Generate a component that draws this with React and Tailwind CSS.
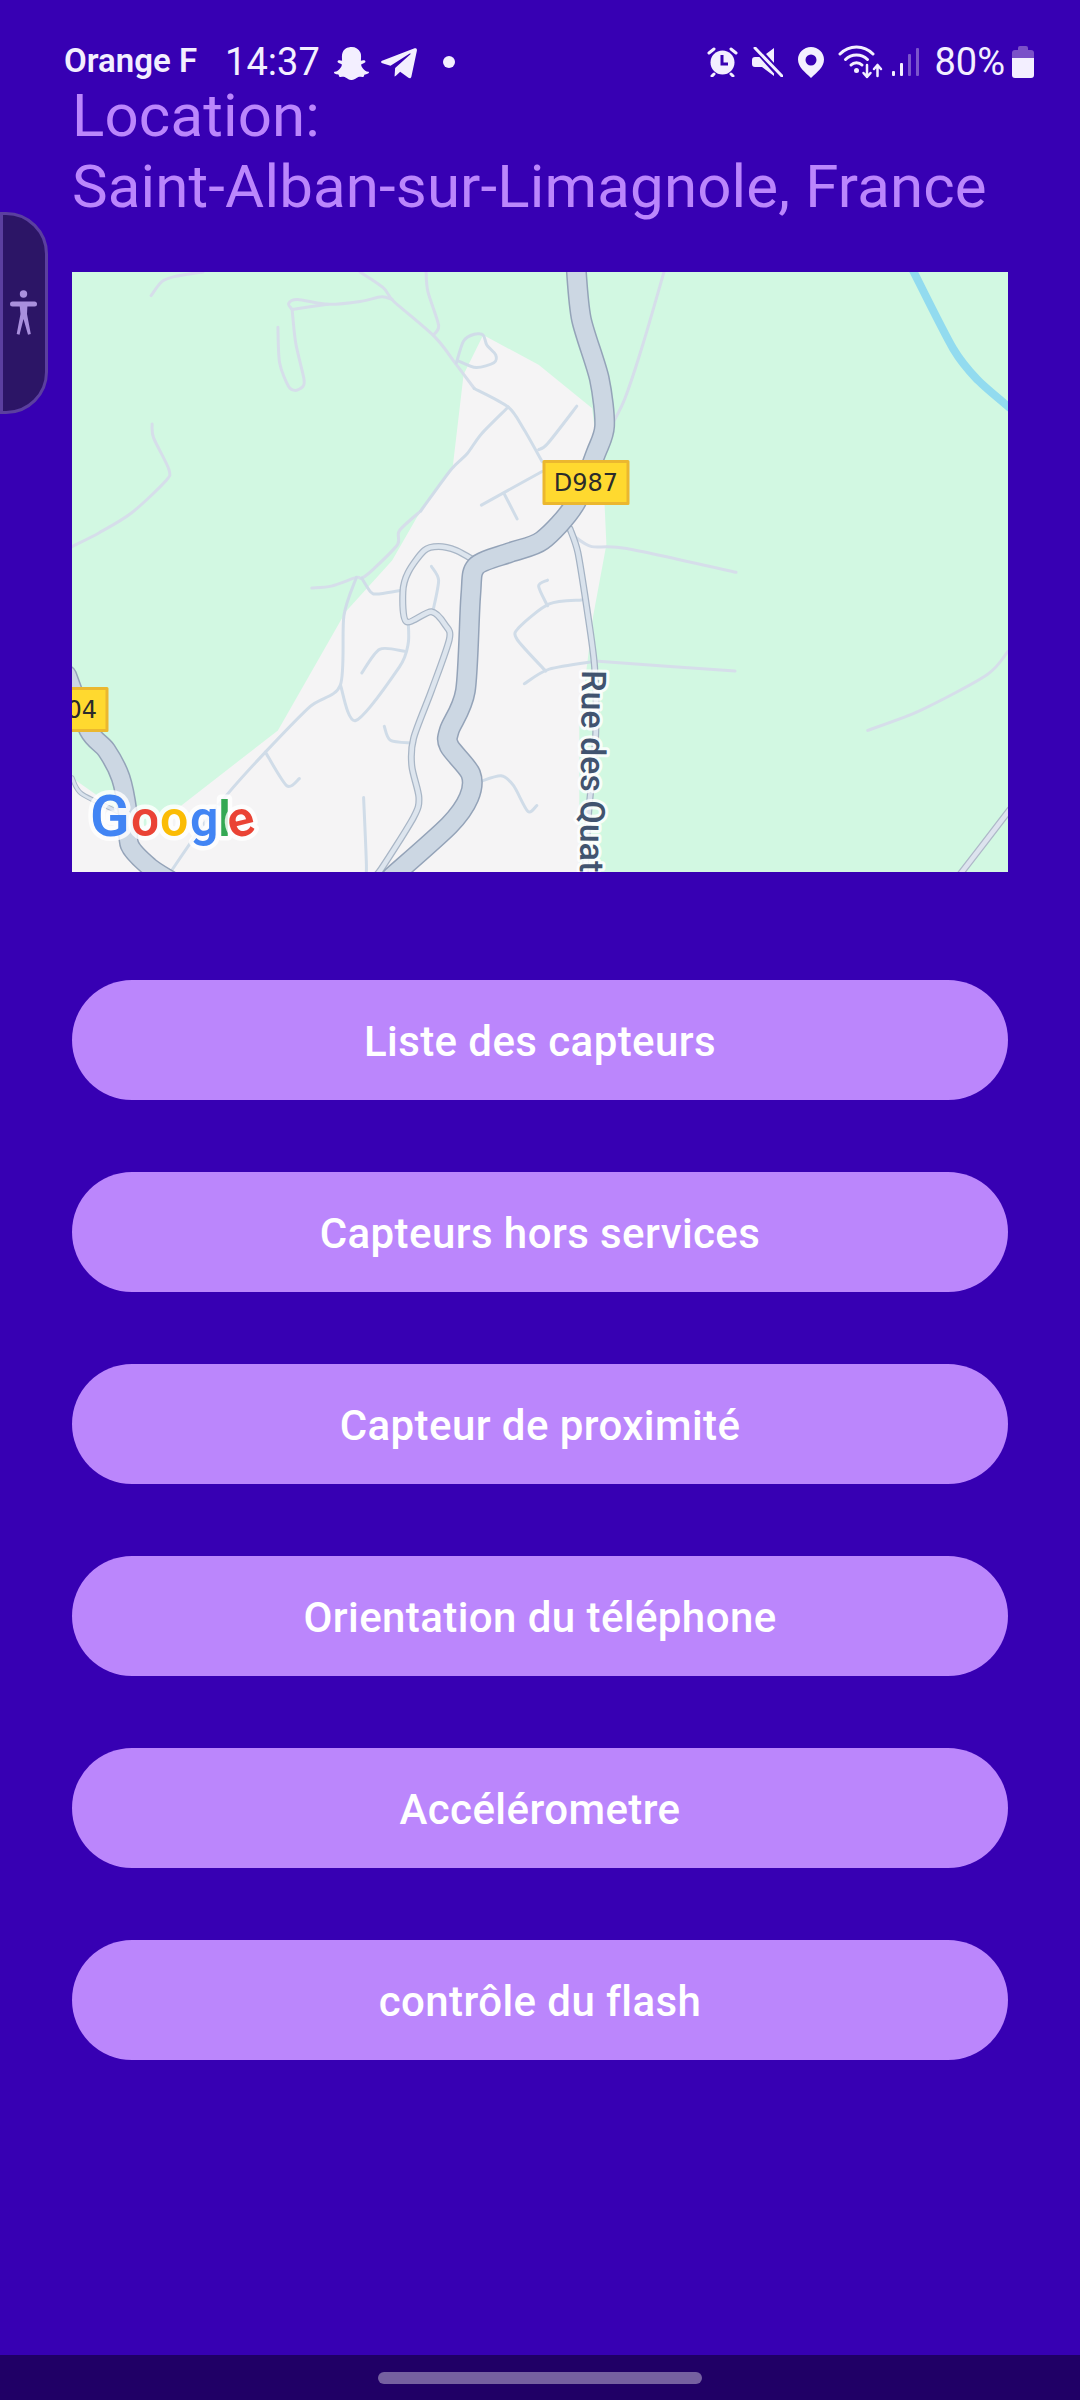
import React from "react";
import { FaSnapchatGhost, FaTelegramPlane } from "react-icons/fa";

// zoom crop coords -> map local coords
const p3 = ([x, y]) => [x / 2.8 - 12, y / 2.53 - 12];
const p4 = ([x, y]) => [448 + x / 3, y / 2.53 - 12];

const smooth = (pts) => {
  let d = `M${pts[0][0].toFixed(1)} ${pts[0][1].toFixed(1)}`;
  for (let i = 0; i < pts.length - 1; i++) {
    const a = pts[i - 1] || pts[i];
    const b = pts[i];
    const c = pts[i + 1];
    const e = pts[i + 2] || c;
    const k = 0.14;
    d += ` C${(b[0] + (c[0] - a[0]) * k).toFixed(1)} ${(b[1] + (c[1] - a[1]) * k).toFixed(1)} ${(c[0] - (e[0] - b[0]) * k).toFixed(1)} ${(c[1] - (e[1] - b[1]) * k).toFixed(1)} ${c[0].toFixed(1)} ${c[1].toFixed(1)}`;
  }
  return d;
};
const line3 = (pts) => smooth(pts.map(p3));
const line4 = (pts) => smooth(pts.map(p4));

const urbanArea = [
  ...[[1185, 190], [1340, 265], [1490, 375], [1525, 620], [1530, 720], [1493, 900], [1454, 1180], [1454, 1560], [34, 1560], [34, 1310], [160, 1390], [220, 1440], [340, 1380], [610, 1190], [800, 890], [930, 760], [1000, 650], [1100, 520], [1130, 290]],
].map(p3).map((p) => p.map((n) => n.toFixed(1)).join(",")).join(" ");

const minorGreen = [
  line3([[255, 90], [285, 55], [320, 42], [400, 30]]),
  line3([[650, 125], [640, 110], [665, 100], [750, 112], [840, 105], [900, 93], [930, 100]]),
  line3([[650, 125], [750, 112]]),
  line3([[840, 30], [905, 70], [935, 105], [1050, 195], [1110, 265], [1160, 325]]),
  line3([[650, 125], [660, 210], [683, 300], [680, 320], [660, 330], [640, 320], [615, 260], [610, 170]]),
  line3([[1025, 30], [1030, 80], [1060, 165], [1045, 190]]),
  line3([[258, 415], [262, 450], [305, 530], [295, 560], [200, 640], [110, 690], [34, 725]]),
  line3([[1010, 635], [950, 685], [945, 720], [880, 780], [845, 805], [830, 803], [760, 825], [705, 830]]),
  line4([[165, 700], [215, 725], [320, 730], [648, 790]]),
  line4([[235, 1015], [645, 1040]]),
  line4([[1043, 1190], [1200, 1140], [1400, 1050], [1464, 990]]),
  line4([[432, 30], [370, 210], [315, 350], [280, 410]]),
];

const minorGray = [
  line3([[1160, 325], [1255, 372], [1300, 430], [1350, 510]]),
  line3([[1110, 260], [1130, 205], [1160, 188], [1185, 190], [1195, 215], [1220, 240], [1215, 260], [1165, 272], [1115, 255]]),
  line3([[1255, 372], [1180, 440], [1140, 490], [1095, 530], [1010, 635]]),
  line3([[845, 805], [870, 840], [890, 845], [960, 835]]),
  line3([[830, 803], [795, 900], [785, 1075], [700, 1130], [575, 1245], [470, 1350], [400, 1430], [310, 1548]]),
  line3([[785, 1075], [828, 1165], [950, 1030], [975, 970], [975, 915]]),
  line3([[845, 1045], [895, 985], [965, 990]]),
  line3([[1040, 775], [1060, 810], [1045, 885]]),
  line3([[575, 1245], [635, 1330], [670, 1312]]),
  line3([[908, 1180], [925, 1215], [985, 1222]]),
  line3([[850, 1360], [858, 1530], [855, 1560]]),
  line3([[1175, 1320], [1235, 1305], [1270, 1330], [1310, 1395], [1335, 1380]]),
  line3([[1180, 620], [1350, 535]]),
  line3([[1243, 590], [1280, 655]]),
  line3([[1340, 480], [1365, 465], [1447, 370]]),
  line3([[1365, 810], [1340, 825], [1365, 875]]),
  line3([[1460, 860], [1370, 870], [1285, 930], [1280, 960], [1360, 1040]]),
  line3([[1300, 1072], [1370, 1035], [1500, 1015]]),
];

const mainRoad = line3([[1445, 20], [1460, 150], [1510, 300], [1525, 420], [1500, 490], [1440, 620], [1350, 710], [1260, 740], [1165, 775], [1150, 850], [1135, 1090], [1090, 1190], [1090, 1230], [1150, 1300], [1145, 1360], [1090, 1430], [930, 1560]]);
const leftRoad = line3([[20, 1050], [80, 1190], [130, 1240], [170, 1310], [190, 1400], [195, 1480], [250, 1535], [310, 1570]]);
const leftThin = line3([[34, 1310], [60, 1350], [160, 1395]]);
const loopRoad = line3([[1160, 760], [1110, 735], [1060, 725], [1020, 735], [975, 790], [960, 840], [970, 915], [1040, 890], [1080, 925], [1090, 960], [1040, 1090], [990, 1210], [985, 1280], [1005, 1360], [990, 1410], [900, 1540], [870, 1570]]);
const quatreRoad = line3([[1428, 680], [1450, 740], [1475, 880], [1497, 1030], [1500, 1200], [1480, 1400], [1470, 1560]]);
const cornerRoad = line4([[1315, 1560], [1470, 1390]]);
const river = line4([[1175, 20], [1300, 225], [1375, 305], [1475, 378]]);

function MapView() {
  return (
    <div className="w-full h-[600px] bg-[#d2f8e2] overflow-hidden">
      <svg width="936" height="600" viewBox="0 0 936 600" fill="none" strokeLinecap="round" strokeLinejoin="round">
        <polygon points={urbanArea} fill="#f5f4f5" />
        <path d={river} stroke="#92dbef" strokeWidth="8" strokeLinecap="butt" />
        {minorGreen.map((d, i) => <path key={i} d={d} stroke="#d6deea" strokeWidth="3" />)}
        {minorGray.map((d, i) => <path key={i} d={d} stroke="#d0dce8" strokeWidth="3" />)}
        <path d={leftThin} stroke="#a9b6c6" strokeWidth="5" />
        <path d={leftThin} stroke="#d9e2ec" strokeWidth="3" />
        <path d={cornerRoad} stroke="#aeb8c8" strokeWidth="7" />
        <path d={cornerRoad} stroke="#dde3ee" strokeWidth="4.5" />
        <path d={quatreRoad} stroke="#a5b3c4" strokeWidth="7" />
        <path d={quatreRoad} stroke="#d9e2ec" strokeWidth="4.5" />
        <path d={loopRoad} stroke="#a9b6c6" strokeWidth="7" />
        <path d={loopRoad} stroke="#dde5ee" strokeWidth="4.5" />
        <path d={leftRoad} stroke="#94a3b8" strokeWidth="20" />
        <path d={leftRoad} stroke="#ccd7e3" strokeWidth="17" />
        <path d={mainRoad} stroke="#94a3b8" strokeWidth="21" />
        <path d={mainRoad} stroke="#ccd7e3" strokeWidth="18" />

        {/* road shields */}
        <rect x="472" y="189.5" width="84" height="42" fill="#ffd92f" stroke="#ebb72f" strokeWidth="3" />
        <text x="514" y="219" textAnchor="middle" fontFamily="DejaVu Sans, sans-serif" fontSize="24" fill="#2b2b2b">D987</text>
        <rect x="-10" y="416.5" width="45" height="42" fill="#ffd92f" stroke="#ebb72f" strokeWidth="3" />
        <text x="25" y="446" textAnchor="end" fontFamily="DejaVu Sans, sans-serif" fontSize="24" fill="#2b2b2b">D04</text>

        <text
          transform="translate(510 398) rotate(90.6)"
          fontFamily="Roboto, sans-serif"
          fontWeight="500"
          fontSize="34"
          fill="#41536f"
          stroke="#ffffff"
          strokeOpacity="0.85"
          strokeWidth="6"
          paintOrder="stroke"
        >
          Rue des Quatre
        </text>

        {/* google logo */}
        <g fontFamily="Roboto, sans-serif" fontWeight="600" stroke="#ffffff" strokeOpacity="0.8" strokeWidth="9" paintOrder="stroke">
          <text x="18" y="564" fontSize="58" fill="#4285f4">G</text>
          <text x="59" y="564" fontSize="50" fill="#ea4335">o</text>
          <text x="88" y="564" fontSize="50" fill="#fbbc05">o</text>
          <text x="118" y="564" fontSize="50" fill="#4285f4">g</text>
          <text x="146" y="564" fontSize="50" fill="#34a853">l</text>
          <text x="156" y="564" fontSize="50" fill="#ea4335" transform="rotate(-14 170 552)">e</text>
        </g>
      </svg>
    </div>
  );
}

function StatusBar() {
  return (
    <div className="absolute top-0 left-0 w-full h-[80px] pl-[64px] flex items-start text-[#f3efff] font-['Roboto',sans-serif]">
      <span className="mt-[42px] text-[33px] leading-[38px] font-semibold whitespace-nowrap">Orange F</span>
      <span className="mt-[39px] ml-[28px] text-[38px] leading-[46px] font-normal">14:37</span>
      <FaSnapchatGhost className="mt-[46px] ml-[13px] w-[37px] h-[35px]" />
      <FaTelegramPlane className="mt-[43px] ml-[11px] w-[36px] h-[41px]" />
      <span className="mt-[56px] ml-[26px] w-[12px] h-[12px] rounded-full bg-[#f3efff]" />

      <div className="ml-auto flex items-start">
        <svg className="mt-[47px]" width="31" height="30" viewBox="0 0 31 30" fill="#f3efff">
          <circle cx="15.5" cy="15.5" r="12" />
          <path d="M2 6l5-4M29 6l-5-4M7 27l-2 2M24 27l2 2" stroke="#f3efff" strokeWidth="3" strokeLinecap="round" />
          <path d="M15 8v9h6" fill="none" stroke="#3700b3" strokeWidth="3" />
        </svg>
        <svg className="mt-[47px] ml-[14px]" width="31" height="30" viewBox="0 0 31 30" fill="#f3efff">
          <path d="M22 1v28L10 20H3a3 3 0 0 1-3-3v-4a3 3 0 0 1 3-3h7z" />
          <path d="M4 1l25 28" stroke="#3700b3" strokeWidth="7" />
          <path d="M3 1l27 28" stroke="#f3efff" strokeWidth="3" strokeLinecap="round" />
        </svg>
        <svg className="mt-[47px] ml-[15px]" width="26" height="31" viewBox="0 0 26 31" fill="#f3efff">
          <path fillRule="evenodd" d="M13 0C5.8 0 0 5.6 0 12.6 0 20 7 25.500 13 31c6-5.500 13-11 13-18.400C26 5.600 20.200 0 13 0zm0 7.500a5.500 5.500 0 1 1 0 11 5.500 5.500 0 0 1 0-11z" />
        </svg>
        <svg className="mt-[45px] ml-[14px]" width="45" height="34" viewBox="0 0 45 34" fill="none" stroke="#f3efff" strokeLinecap="round">
          <path d="M2 9c9-9.500 24-9.500 33 0" strokeWidth="3" />
          <path d="M7.500 14.500c6-6 16-6 22 0" strokeWidth="3" />
          <path d="M13 20c3-3 8-3 11 0" strokeWidth="3" />
          <circle cx="18.500" cy="25.500" r="2.500" fill="#f3efff" stroke="none" />
          <path d="M29 20v12M25.500 28l3.500 4 3.500-4M39.500 31V20M36 24l3.500-4 3.500 4" strokeWidth="2.500" strokeLinejoin="round" />
        </svg>
        <div className="mt-[47px] ml-[9px] h-[29px] flex items-end gap-[4.500px]">
          <span className="w-[3.500px] h-[5px] rounded-[1px] bg-[#f3efff]" />
          <span className="w-[3.500px] h-[13px] rounded-[1px] bg-[#f3efff]" />
          <span className="w-[3.500px] h-[22px] rounded-[1px] bg-[#7b55cc]" />
          <span className="w-[3.500px] h-[28px] rounded-[1px] bg-[#7b55cc]" />
        </div>
        <span className="mt-[39px] ml-[15px] text-[38px] leading-[46px] font-normal">80%</span>
        <div className="mt-[46px] ml-[7px] mr-[46px] w-[22px] flex flex-col items-center">
          <span className="w-[10px] h-[4px] rounded-t-[2px] bg-[#7a50c8]" />
          <span className="w-full h-[8px] rounded-t-[3px] bg-[#7a50c8]" />
          <span className="w-full h-[20px] rounded-b-[3px] bg-[#f3efff]" />
        </div>
      </div>
    </div>
  );
}

function AccessibilityTab() {
  return (
    <div className="absolute left-0 top-[212px] w-[48px] h-[202px] bg-[#2c1566] border-[3px] border-[#5b3f9f] rounded-r-[42px] flex items-center justify-center">
      <svg className="-ml-[2px]" width="27" height="46" viewBox="0 0 27 46" fill="#a98fdd">
        <circle cx="13.500" cy="4" r="3.700" />
        <path d="M2.500 14h22" stroke="#a98fdd" strokeWidth="5" strokeLinecap="round" />
        <path d="M9.500 14h8l-.5 10 3.800 20-2.800.8L13.500 29 9.500 44.800l-2.800-.8 3.800-20z" />
      </svg>
    </div>
  );
}

const buttons = [
  "Liste des capteurs",
  "Capteurs hors services",
  "Capteur de proximité",
  "Orientation du téléphone",
  "Accélérometre",
  "contrôle du flash",
];

export default function App() {
  return (
    <div className="relative w-[1080px] h-[2400px] flex flex-col bg-[#3700b3] font-['Roboto',sans-serif] overflow-hidden">
      <main className="flex-1 pt-[80px] px-[72px]">
        <div className="text-[60px] leading-[71px] tracking-[0.15px] text-[#bb86fc] whitespace-nowrap">
          <div>Location:</div>
          <div>Saint-Alban-sur-Limagnole, France</div>
        </div>
        <div className="mt-[50px]">
          <MapView />
        </div>
        <div className="mt-[108px] flex flex-col gap-[72px]">
          {buttons.map((b) => (
            <button key={b} className="h-[120px] pt-[2px] rounded-full bg-[#bb86fc] text-white text-[42px] font-medium tracking-[0.42px] flex items-center justify-center">
              {b}
            </button>
          ))}
        </div>
      </main>
      <div className="shrink-0 h-[45px] bg-[#200066] flex justify-center pt-[17px]">
        <div className="w-[324px] h-[12px] rounded-full bg-[#7560a0]" />
      </div>
      <StatusBar />
      <AccessibilityTab />
    </div>
  );
}
